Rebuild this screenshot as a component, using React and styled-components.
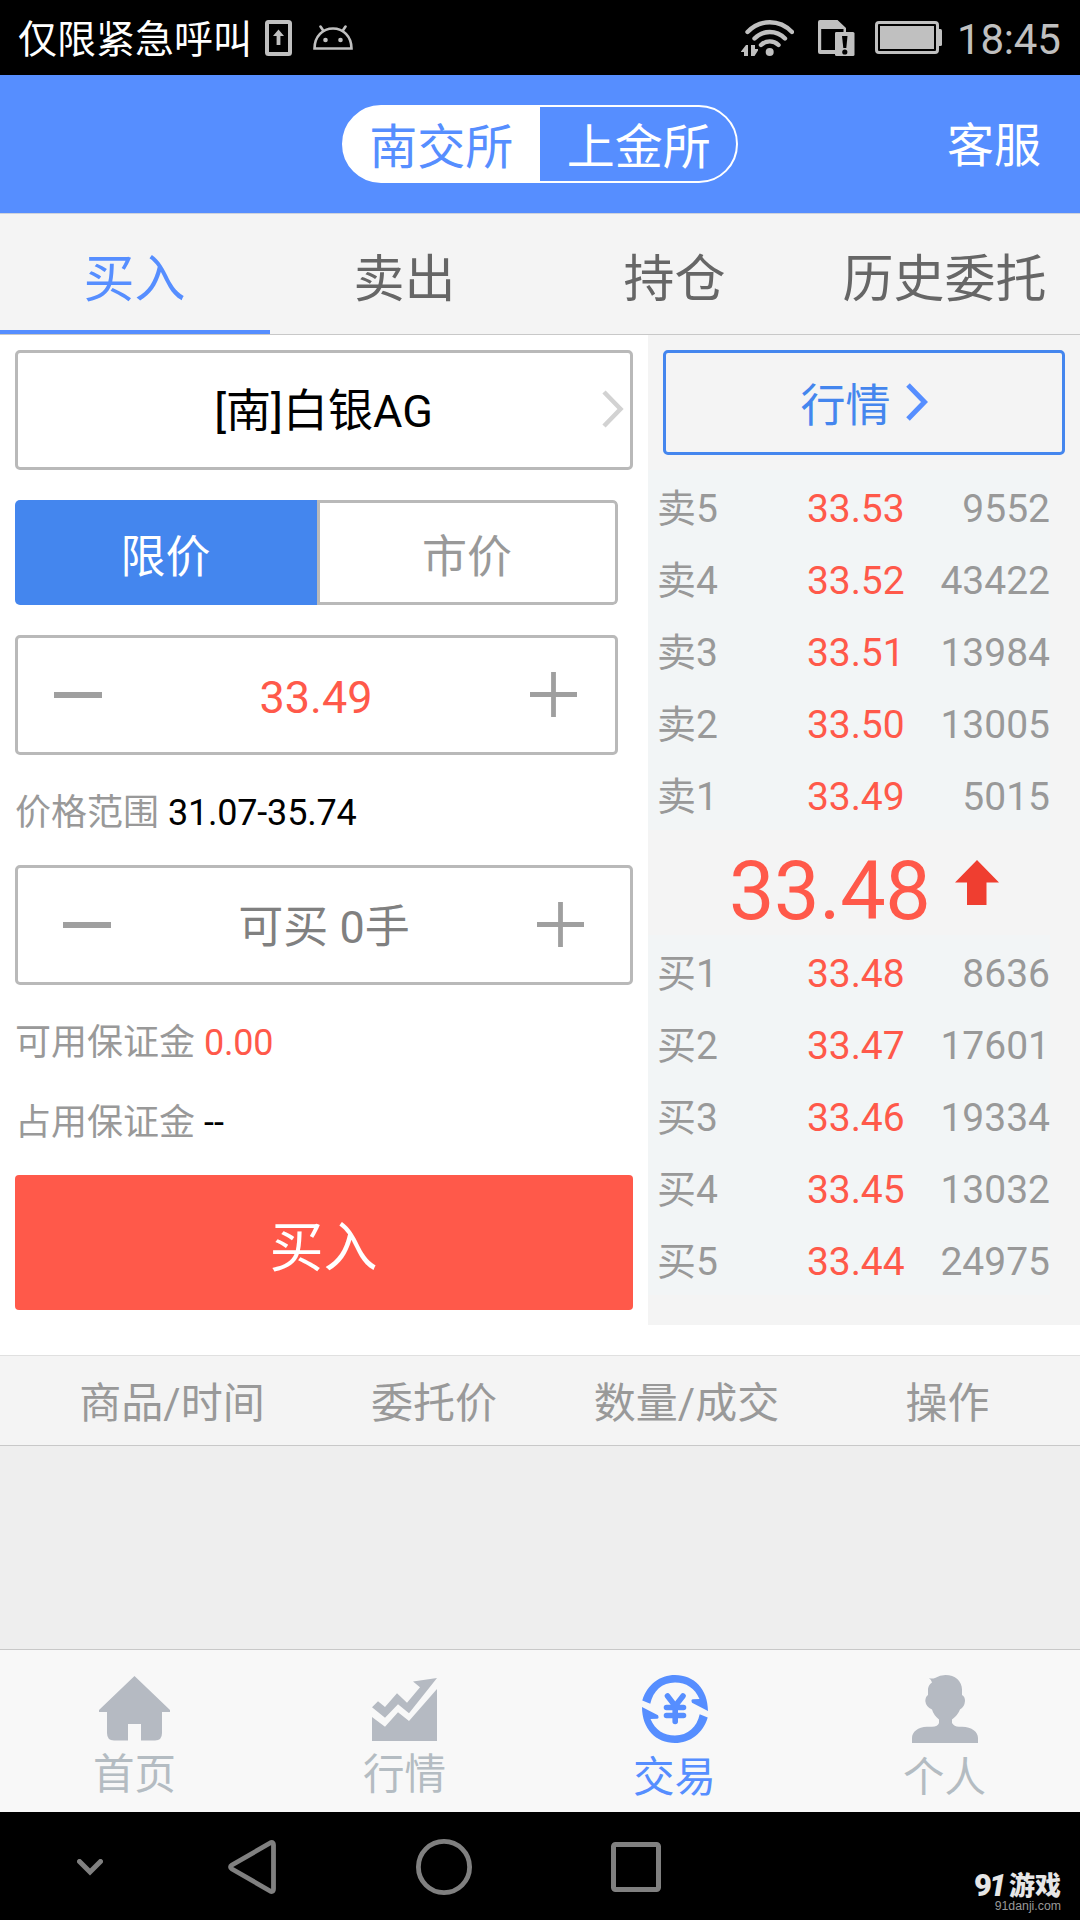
import React, { useState } from "react";
import styled, { createGlobalStyle } from "styled-components";

const sells = [
  ["卖5", "33.53", "9552"],
  ["卖4", "33.52", "43422"],
  ["卖3", "33.51", "13984"],
  ["卖2", "33.50", "13005"],
  ["卖1", "33.49", "5015"],
];

const buys = [
  ["买1", "33.48", "8636"],
  ["买2", "33.47", "17601"],
  ["买3", "33.46", "19334"],
  ["买4", "33.45", "13032"],
  ["买5", "33.44", "24975"],
];

const tabs = ["买入", "卖出", "持仓", "历史委托"];

function StatusBar() {
  return (
    <Status>
      <Carrier>仅限紧急呼叫</Carrier>
      <StatusIcon width="27" height="36" viewBox="0 0 27 36" $gap={15}>
        <rect x="2" y="2" width="23" height="32" rx="1.5" fill="none" stroke="#c0c0c0" strokeWidth="4" />
        <path d="M13.5 9.5L19 16h-3.6v9h-3.8v-9H8z" fill="#c0c0c0" />
      </StatusIcon>
      <StatusIcon width="40" height="25" viewBox="0 0 40 25" $gap={21}>
        <path d="M1.5 23.5C1.5 11 10 3.5 20 3.5S38.5 11 38.5 23.5z" fill="none" stroke="#c0c0c0" strokeWidth="2.6" />
        <path d="M7.5 1.5L10.5 6M32.5 1.5L29.5 6" stroke="#c0c0c0" strokeWidth="2.6" strokeLinecap="round" />
        <circle cx="12.5" cy="15" r="2.3" fill="#c0c0c0" />
        <circle cx="27.5" cy="15" r="2.3" fill="#c0c0c0" />
      </StatusIcon>
      <Spacer />
      <StatusIcon width="53" height="36" viewBox="0 0 53 36">
        <g fill="none" stroke="#c0c0c0" strokeWidth="4.4" strokeLinecap="round">
          <path d="M6.5 12C19 -1 38.5 -1 51 12" />
          <path d="M13.5 18.5C22 9.8 35.5 9.8 44 18.5" />
          <path d="M20 25C25 20.2 32.5 20.2 37.5 25" />
        </g>
        <circle cx="28.7" cy="32" r="4" fill="#c0c0c0" />
        <path d="M0 31.5L5 25h2v11H3v-4H0zM10 25h4v4h3v1.5L13.5 36H10z" fill="#c0c0c0" />
      </StatusIcon>
      <StatusIcon width="37" height="36" viewBox="0 0 37 36" $gap={24}>
        <path fillRule="evenodd" d="M2 0H19.5L28 8V34H2Q0 34 0 32V2Q0 0 2 0zM3.2 9V30H17V14Q17 12 19 12H25.5V9z" fill="#c0c0c0" />
        <rect x="17" y="12" width="19.5" height="24" rx="1.5" fill="#c0c0c0" />
        <path d="M24 16h5.5l-1.2 12h-3z" fill="#000" />
        <circle cx="26.8" cy="32" r="2.6" fill="#000" />
      </StatusIcon>
      <StatusIcon width="67" height="33" viewBox="0 0 67 33" $gap={20}>
        <rect x="1.5" y="1.5" width="61" height="30" rx="2.5" fill="none" stroke="#c0c0c0" strokeWidth="3" />
        <rect x="5" y="5" width="54" height="23" fill="#c0c0c0" />
        <path d="M64 8h1.5q1.5 0 1.5 1.5v14q0 1.5-1.5 1.5H64z" fill="#c0c0c0" />
      </StatusIcon>
      <Clock>18:45</Clock>
    </Status>
  );
}

function Chevron({ color, weight }) {
  return (
    <svg width="22" height="38" viewBox="0 0 22 38">
      <path d="M2 2L18.5 19L2 36" fill="none" stroke={color} strokeWidth={weight} />
    </svg>
  );
}

function Minus() {
  return (
    <svg width="48" height="6" viewBox="0 0 48 6">
      <rect width="48" height="6" fill="#9f9f9f" />
    </svg>
  );
}

function Plus() {
  return (
    <svg width="47" height="45" viewBox="0 0 47 45">
      <path d="M0 22.5H47M23.5 0V45" stroke="#9f9f9f" strokeWidth="4.8" />
    </svg>
  );
}

function Book({ rows }) {
  return (
    <BookList>
      {rows.map(([name, price, amount]) => (
        <BookRow key={name}>
          <span>{name}</span>
          <Price>{price}</Price>
          <Amount>{amount}</Amount>
        </BookRow>
      ))}
    </BookList>
  );
}

function HomeIcon() {
  return (
    <svg width="71" height="65" viewBox="0 0 71 65">
      <path d="M35.5 0L71 34v2h-8v21q0 7.500-7 7.500H42V48H29v16.500H15q-7 0-7-7.500V36H0v-2z" fill="#b5bac2" />
    </svg>
  );
}

function ChartIcon() {
  return (
    <svg width="65" height="63" viewBox="0 0 65 63">
      <path d="M0 39L13 48.7L26 34.3L37 43L65 11V63H0z" fill="#b5bac2" />
      <path d="M0 29.3L6 23.3L13 29L25 15.3L35 24.7L48 9.3L41 3.5L65 0L37 35.3L26 26.3L13 39.7z" fill="#b5bac2" />
    </svg>
  );
}

function TradeIcon() {
  const arrow = "M0.3 25.5C5 9.500 18 0 33 0C52 0 66 14 66 36L50 27.800Q48.500 24.500 51 24.300L57.500 24C53 13 44 7.500 33 7.500C20 7.500 11 16 8.300 28.700z";
  return (
    <svg width="66" height="68" viewBox="0 0 66 68">
      <path d={arrow} fill="#568eff" />
      <path d={arrow} fill="#568eff" transform="rotate(180 33 34)" />
      <path d="M25.5 21L33.2 31L41 21M33.2 31V46.5M24.5 32.5H41.5M24.5 40.5H41.5" fill="none" stroke="#568eff" strokeWidth="5.6" strokeLinecap="round" />
    </svg>
  );
}

function PersonIcon() {
  return (
    <svg width="66" height="68" viewBox="0 0 66 68">
      <path d="M17 3Q20 4 23 3Q28 0 33.5 0C43 0 50 6 50 14.5V20Q53 21.5 53 26Q52.5 32 48 34.5Q46 40 40 44.5V48Q42 51.5 47 51.8H50C60 52 66 57 66 63V68H0V63C0 57 6 52 15 51.8H20Q26 51.5 27 48V44.5Q21.5 40 20 34.5Q14 32 13.3 26Q13.5 21.5 16 20V14Q16.5 9.5 20 7.5Q19.5 5 17 3z" fill="#b5bac2" />
    </svg>
  );
}

function App() {
  const [tab, setTab] = useState(0);
  const [market, setMarket] = useState(false);

  return (
    <Page>
      <GlobalStyle />
      <StatusBar />
      <Header>
        <Exchange>
          <ExchangeItem $active>南交所</ExchangeItem>
          <ExchangeItem>上金所</ExchangeItem>
        </Exchange>
        <Service>客服</Service>
      </Header>
      <Tabs>
        {tabs.map((name, index) => (
          <Tab key={name} $active={index === tab} onClick={() => setTab(index)}>
            {name}
          </Tab>
        ))}
      </Tabs>

      <Main>
        <OrderForm>
          <Product>
            <ProductName>[南]白银AG</ProductName>
            <Chevron color="#d2d2d2" weight={4.5} />
          </Product>
          <Mode>
            <ModeItem $active={!market} onClick={() => setMarket(false)}>限价</ModeItem>
            <ModeItem $active={market} onClick={() => setMarket(true)}>市价</ModeItem>
          </Mode>
          <Stepper $width={603} $left={36} $right={38}>
            <Minus />
            <StepValue $color="#ff594a">33.49</StepValue>
            <Plus />
          </Stepper>
          <RangeLine>
            价格范围 <b>31.07-35.74</b>
          </RangeLine>
          <Stepper $width={618} $left={45} $right={46}>
            <Minus />
            <StepValue $color="#808080">可买 0手</StepValue>
            <Plus />
          </Stepper>
          <Funds>
            <FundLine>
              可用保证金 <em>0.00</em>
            </FundLine>
            <FundLine>
              占用保证金 <b>--</b>
            </FundLine>
          </Funds>
          <Submit>买入</Submit>
        </OrderForm>

        <Quotes>
          <QuoteLink>
            <span>行情</span>
            <Chevron color="#568eff" weight={5} />
          </QuoteLink>
          <Book rows={sells} />
          <Latest>
            33.48
            <svg width="44" height="45" viewBox="0 0 44 45">
              <path d="M22 0L44 22.5H31.5V45H12V22.5H0z" fill="#ef3e30" />
            </svg>
          </Latest>
          <Book rows={buys} />
        </Quotes>
      </Main>

      <TableHead>
        <span>商品/时间</span>
        <span>委托价</span>
        <span>数量/成交</span>
        <span>操作</span>
      </TableHead>
      <Empty />

      <BottomNav>
        <NavItem>
          <NavIcon><HomeIcon /></NavIcon>
          首页
        </NavItem>
        <NavItem>
          <NavIcon><ChartIcon /></NavIcon>
          行情
        </NavItem>
        <NavItem $active>
          <NavIcon $low><TradeIcon /></NavIcon>
          交易
        </NavItem>
        <NavItem>
          <NavIcon $low><PersonIcon /></NavIcon>
          个人
        </NavItem>
      </BottomNav>

      <SystemBar>
        <svg width="26" height="17" viewBox="0 0 26 17">
          <path d="M2.5 2.5L13 13L23.5 2.5" fill="none" stroke="#808080" strokeWidth="5" strokeLinecap="round" />
        </svg>
        <svg width="48" height="54" viewBox="0 0 48 54">
          <path d="M43 2.5Q45.5 2 45.5 5V49Q45.5 52 43 51.5L4 29Q1 27 4 25z" fill="none" stroke="#808080" strokeWidth="4.8" />
        </svg>
        <svg width="56" height="56" viewBox="0 0 56 56">
          <circle cx="28" cy="28" r="25.6" fill="none" stroke="#808080" strokeWidth="4.8" />
        </svg>
        <svg width="50" height="50" viewBox="0 0 50 50">
          <rect x="2.5" y="2.5" width="45" height="45" rx="2" fill="none" stroke="#808080" strokeWidth="5" />
        </svg>
        <Watermark>
          <Brand><b>9<i>1</i></b>游戏</Brand>
          <Site>91danji.com</Site>
        </Watermark>
      </SystemBar>
    </Page>
  );
}

export default App;

const GlobalStyle = createGlobalStyle`
  * {
    box-sizing: border-box;
  }

  body {
    margin: 0;
    background: #fff;
    font-family: Roboto, "Noto Sans CJK SC", sans-serif;
  }

  svg {
    display: block;
    flex-shrink: 0;
  }
`;

const Page = styled.div`
  width: 1080px;
  height: 1920px;
  display: flex;
  flex-direction: column;
  overflow: hidden;
  background: #fff;
`;

const Status = styled.div`
  height: 75px;
  display: flex;
  align-items: center;
  padding: 0 18px;
  background: #000;
`;

const Carrier = styled.div`
  width: 232px;
  padding-top: 4px;
  font-size: 39px;
  line-height: 50px;
  white-space: nowrap;
  color: #fff;
`;

const StatusIcon = styled.svg`
  margin-left: ${(props) => props.$gap || 0}px;
`;

const Spacer = styled.div`
  flex: 1;
`;

const Clock = styled.div`
  width: 105px;
  margin-left: 15px;
  padding-top: 4px;
  font-size: 42px;
  line-height: 50px;
  letter-spacing: -0.2px;
  color: #c0c0c0;
`;

const Header = styled.div`
  height: 139px;
  display: grid;
  grid-template-columns: 342px 396px 1fr;
  align-items: center;
  padding-bottom: 1px;
  border-bottom: 1px solid #cfd3dc;
  background: #568eff;
`;

const Exchange = styled.div`
  grid-column: 2;
  height: 78px;
  display: flex;
  border: 2px solid #fff;
  border-radius: 39px;
  background: linear-gradient(90deg, #fff 50%, #568eff 50%);
`;

const ExchangeItem = styled.div`
  flex: 1;
  padding: ${(props) => (props.$active ? "6px 2px 0 0" : "6px 0 0 1px")};
  font-size: 48px;
  line-height: 70px;
  text-align: center;
  color: ${(props) => (props.$active ? "#568eff" : "#fff")};
`;

const Service = styled.div`
  padding: 4px 39px 0 0;
  font-size: 47px;
  line-height: 60px;
  text-align: right;
  color: #fff;
`;

const Tabs = styled.div`
  height: 121px;
  display: flex;
  border-bottom: 1px solid #c8c8c8;
  background: #f4f4f4;
`;

const Tab = styled.div`
  width: 270px;
  padding: 12px 1px 0 0;
  border-bottom: ${(props) => (props.$active ? "4px solid #568eff" : "4px solid transparent")};
  font-size: 51px;
  line-height: 108px;
  text-align: center;
  color: ${(props) => (props.$active ? "#568eff" : "#666")};
`;

const Main = styled.div`
  height: 1020px;
  display: flex;
  align-items: flex-start;
`;

const OrderForm = styled.div`
  width: 648px;
  padding: 15px;
`;

const Product = styled.div`
  height: 120px;
  display: flex;
  align-items: center;
  padding: 0 6px 2px 27px;
  border: 3px solid #b9b9b9;
  border-radius: 5px;
`;

const ProductName = styled.div`
  flex: 1;
  padding-top: 5px;
  font-size: 45px;
  line-height: 60px;
  text-align: center;
  color: #000;
`;

const Mode = styled.div`
  width: 603px;
  height: 105px;
  display: grid;
  grid-template-columns: 302px 301px;
  margin: 30px 0;
  border-radius: 5px;
  overflow: hidden;
`;

const ModeItem = styled.div`
  height: 105px;
  padding: ${(props) => (props.$active ? 14 : 11)}px 1px 0 0;
  border: ${(props) => (props.$active ? "none" : "3px solid #b9b9b9")};
  border-radius: ${(props) => (props.$active ? "0" : "0 5px 5px 0")};
  font-size: 45px;
  line-height: 88px;
  text-align: center;
  color: ${(props) => (props.$active ? "#fff" : "#999")};
  background: ${(props) => (props.$active ? "#4486ee" : "#fff")};
`;

const Stepper = styled.div`
  width: ${(props) => props.$width}px;
  height: 120px;
  display: flex;
  align-items: center;
  padding: 0 ${(props) => props.$right}px 1px ${(props) => props.$left}px;
  border: 3px solid #b9b9b9;
  border-radius: 5px;
`;

const StepValue = styled.div`
  flex: 1;
  padding-top: 6px;
  font-size: 45px;
  line-height: 60px;
  text-align: center;
  color: ${(props) => props.$color};
`;

const RangeLine = styled.div`
  height: 110px;
  padding-top: 6px;
  font-size: 36px;
  line-height: 105px;
  color: #999;

  b {
    font-weight: 400;
    letter-spacing: -0.2px;
    color: #000;
  }
`;

const Funds = styled.div`
  padding: 18px 0 12px;
`;

const FundLine = styled.div`
  font-size: 36px;
  line-height: 80px;
  color: #999;

  b {
    font-weight: 400;
    color: #000;
  }

  em {
    font-style: normal;
    letter-spacing: -0.2px;
    color: #ff594a;
  }
`;

const Submit = styled.div`
  height: 135px;
  padding: 12px 1px 0 0;
  border-radius: 4px;
  font-size: 54px;
  line-height: 123px;
  text-align: center;
  color: #fff;
  background: #ff594a;
`;

const Quotes = styled.div`
  width: 432px;
  height: 990px;
  padding-top: 15px;
  background: #f4f4f4;
`;

const QuoteLink = styled.div`
  width: 402px;
  height: 105px;
  display: flex;
  align-items: center;
  justify-content: center;
  margin: 0 15px 15px;
  border: 3px solid #4486ee;
  border-radius: 5px;
  font-size: 45px;
  line-height: 60px;
  color: #4486ee;

  span {
    padding-top: 9px;
  }

  svg {
    margin: 0 0 2px 15px;
  }
`;

const BookList = styled.div`
  width: 402px;
  background: #f2f5f6;
`;

const BookRow = styled.div`
  height: 72px;
  display: grid;
  grid-template-columns: 150px 110px 1fr;
  padding: 6px 0 0 9px;
  font-size: 39px;
  line-height: 66px;
  color: #999;
`;

const Price = styled.span`
  letter-spacing: -0.1px;
  color: #ff594a;
`;

const Amount = styled.span`
  text-align: right;
`;

const Latest = styled.div`
  height: 105px;
  display: flex;
  padding: 9px 0 0 81px;
  font-size: 81px;
  line-height: 105px;
  letter-spacing: -0.4px;
  color: #ff594a;

  svg {
    margin: 21px 0 0 25px;
  }
`;

const TableHead = styled.div`
  height: 91px;
  display: grid;
  grid-template-columns: 344px 180px 325px 197px;
  padding-top: 6px;
  border-top: 1px solid #e0e0e0;
  border-bottom: 1px solid #c8c8c8;
  font-size: 42px;
  line-height: 84px;
  text-align: center;
  color: #999;
  background: #f4f4f4;
`;

const Empty = styled.div`
  height: 203px;
  background: #eee;
`;

const BottomNav = styled.div`
  height: 163px;
  display: flex;
  border-top: 1px solid #c8c8c8;
  background: #f8f8f8;
`;

const NavItem = styled.div`
  flex: 1;
  display: flex;
  flex-direction: column;
  align-items: center;
  padding-right: 1px;
  font-size: 41.5px;
  line-height: 62px;
  color: ${(props) => (props.$active ? "#568eff" : "#b4bcc2")};
`;

const NavIcon = styled.div`
  height: ${(props) => (props.$low ? 97 : 94)}px;
  display: flex;
  align-items: flex-end;
  padding: 0 0 ${(props) => (props.$low ? 4 : 3)}px ${(props) => (props.$low ? 1 : 0)}px;
`;

const SystemBar = styled.div`
  height: 108px;
  display: grid;
  grid-template-columns: 151px 188px 195px 363px 87px;
  align-items: center;
  padding: 2px 0 0 77px;
  background: #000;
`;

const Watermark = styled.div`
  padding-top: 53px;
`;

const Brand = styled.div`
  display: flex;
  justify-content: space-between;
  font-size: 26px;
  font-weight: 900;
  line-height: 26px;
  white-space: nowrap;
  color: #e6e6e6;

  b {
    font-size: 31px;
    font-weight: 900;
    letter-spacing: -3px;
  }
`;

const Site = styled.div`
  font-family: "Liberation Sans", sans-serif;
  font-size: 12.3px;
  line-height: 15px;
  text-align: right;
  color: #999;
`;
